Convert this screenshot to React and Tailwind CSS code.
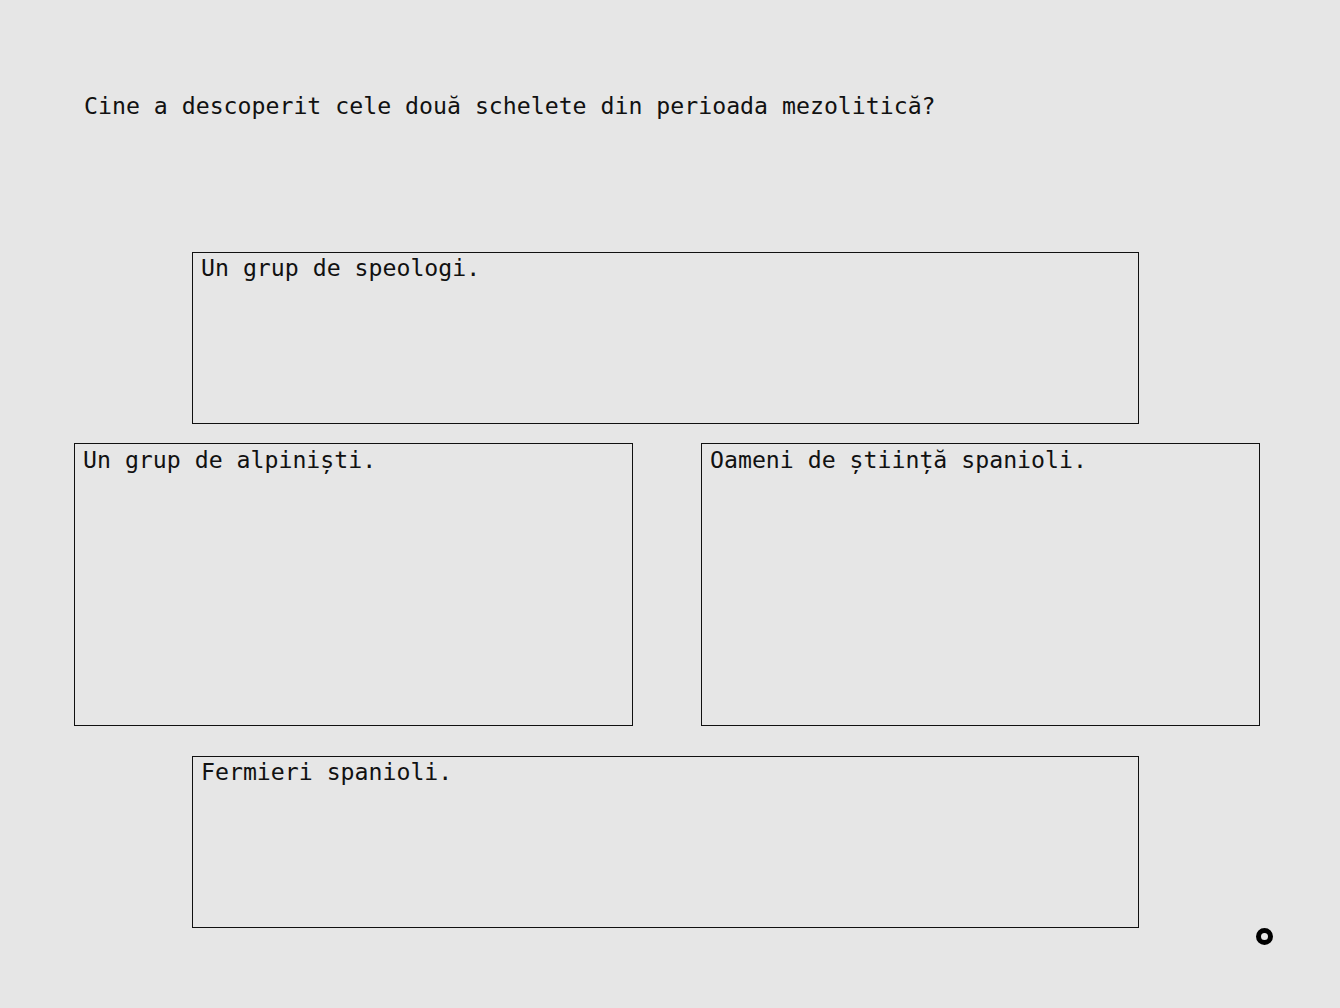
import React from "react";

const answers = {
    top: "Un grup de speologi.",
    left: "Un grup de alpiniști.",
    right: "Oameni de știință spanioli.",
    bottom: "Fermieri spanioli.",
};

function AnswerBox({ text, className }) {
    return (
        <div className={`border border-[#111] px-2 text-[23.2px] leading-[30px] text-[#111] ${className}`}>
            {text}
        </div>
    );
}

export default function App() {
    return (
        <div
            className="relative w-[1340px] h-[1008px] bg-[#e6e6e6] overflow-hidden"
            style={{ fontFamily: '"DejaVu Sans Mono", "Liberation Mono", monospace' }}
        >
            {/* Question */}
            <div className="pt-[90px] pl-[84px] text-[23.2px] leading-[32px] text-[#111]">
                Cine a descoperit cele două schelete din perioada mezolitică?
            </div>

            {/* Answer grid */}
            <div className="mt-[130px] flex flex-col">
                <AnswerBox text={answers.top} className="ml-[192px] w-[947px] h-[172px]" />
                <div className="mt-[19px] ml-[74px] flex gap-[68px]">
                    <AnswerBox text={answers.left} className="w-[559px] h-[283px] pt-px" />
                    <AnswerBox text={answers.right} className="w-[559px] h-[283px] pt-px" />
                </div>
                <AnswerBox text={answers.bottom} className="mt-[30px] ml-[192px] w-[947px] h-[172px]" />
            </div>

            {/* Status ring */}
            <div className="absolute left-[1256px] top-[928px] w-[17px] h-[17px] rounded-full border-[5px] border-black" />
        </div>
    );
}
